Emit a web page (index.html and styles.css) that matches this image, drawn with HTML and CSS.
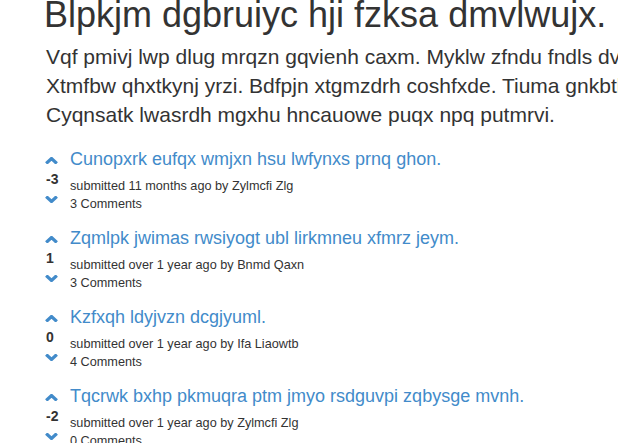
FILE: index.html
```
<!DOCTYPE html>
<html>
<head>
<meta charset="utf-8">
<link rel="stylesheet" href="styles.css">
</head>
<body>
<div class="page">
  <h1 class="title">Blpkjm dgbruiyc hji fzksa dmvlwujx.</h1>
  <p class="lead">Vqf pmivj lwp dlug mrqzn gqvienh caxm. Myklw zfndu fndls dvwqe kaprt.<br>Xtmfbw qhxtkynj yrzi. Bdfpjn xtgmzdrh coshfxde. Tiuma gnkbthz oqwe.<br>Cyqnsatk lwasrdh mgxhu hncauowe puqx npq putmrvi.</p>

  <div class="posts">
    <div class="post">
      <div class="vote">
        <svg class="chev" width="13" height="7" viewBox="0 0 13 7"><polyline points="1.2,6.5 6.5,1.5 11.8,6.5"/></svg>
        <div class="score">-3</div>
        <svg class="chev" width="13" height="7" viewBox="0 0 13 7"><polyline points="1.2,0.5 6.5,5.5 11.8,0.5"/></svg>
      </div>
      <div class="body">
        <a class="post-title" href="#">Cunopxrk eufqx wmjxn hsu lwfynxs prnq ghon.</a>
        <div class="meta first">submitted 11 months ago by Zylmcfi Zlg</div>
        <div class="meta">3 Comments</div>
      </div>
    </div>

    <div class="post">
      <div class="vote">
        <svg class="chev" width="13" height="7" viewBox="0 0 13 7"><polyline points="1.2,6.5 6.5,1.5 11.8,6.5"/></svg>
        <div class="score">1</div>
        <svg class="chev" width="13" height="7" viewBox="0 0 13 7"><polyline points="1.2,0.5 6.5,5.5 11.8,0.5"/></svg>
      </div>
      <div class="body">
        <a class="post-title" href="#">Zqmlpk jwimas rwsiyogt ubl lirkmneu xfmrz jeym.</a>
        <div class="meta first">submitted over 1 year ago by Bnmd Qaxn</div>
        <div class="meta">3 Comments</div>
      </div>
    </div>

    <div class="post">
      <div class="vote">
        <svg class="chev" width="13" height="7" viewBox="0 0 13 7"><polyline points="1.2,6.5 6.5,1.5 11.8,6.5"/></svg>
        <div class="score">0</div>
        <svg class="chev" width="13" height="7" viewBox="0 0 13 7"><polyline points="1.2,0.5 6.5,5.5 11.8,0.5"/></svg>
      </div>
      <div class="body">
        <a class="post-title" href="#">Kzfxqh ldyjvzn dcgjyuml.</a>
        <div class="meta first">submitted over 1 year ago by Ifa Liaowtb</div>
        <div class="meta">4 Comments</div>
      </div>
    </div>

    <div class="post">
      <div class="vote">
        <svg class="chev" width="13" height="7" viewBox="0 0 13 7"><polyline points="1.2,6.5 6.5,1.5 11.8,6.5"/></svg>
        <div class="score">-2</div>
        <svg class="chev" width="13" height="7" viewBox="0 0 13 7"><polyline points="1.2,0.5 6.5,5.5 11.8,0.5"/></svg>
      </div>
      <div class="body">
        <a class="post-title" href="#">Tqcrwk bxhp pkmuqra ptm jmyo rsdguvpi zqbysge mvnh.</a>
        <div class="meta first">submitted over 1 year ago by Zylmcfi Zlg</div>
        <div class="meta">0 Comments</div>
      </div>
    </div>
  </div>
</div>
</body>
</html>
```

FILE: styles.css
```
html, body {
  margin: 0;
  padding: 0;
  overflow: hidden;
  background: #fff;
}
body {
  font-family: "Liberation Sans", Arial, Helvetica, sans-serif;
  color: #333;
  font-size: 14px;
  line-height: 1.42857;
}
.page {
  padding-left: 44px;
  width: 900px;
}
.title {
  font-size: 36px;
  font-weight: 500;
  line-height: 1.1;
  margin: -5px 0 0 0;
  white-space: nowrap;
}
.lead {
  font-size: 21px;
  line-height: 1.4;
  margin: 7px 0 19px 2px;
  white-space: nowrap;
}
.posts {
  display: flex;
  flex-direction: column;
  gap: 14px;
}
.post {
  display: flex;
  height: 65px;
}
.vote {
  width: 26px;
  flex: 0 0 26px;
  display: flex;
  flex-direction: column;
  align-items: flex-start;
}
.chev {
  display: block;
  margin-left: 1px;
}
.chev polyline {
  fill: none;
  stroke: #428bca;
  stroke-width: 3.2;
}
.vote .chev:first-child {
  margin-top: 8px;
}
.score {
  font-weight: bold;
  font-size: 14px;
  line-height: 20px;
  margin-top: 5px;
  padding-left: 2px;
  color: #333;
}
.vote .chev:last-child {
  margin-top: 7px;
}
.body {
  display: flex;
  flex-direction: column;
  align-items: flex-start;
}
.post-title {
  font-size: 18px;
  line-height: 20px;
  color: #428bca;
  text-decoration: none;
  white-space: nowrap;
}
.meta {
  font-size: 12.7px;
  line-height: 18px;
  color: #333;
  white-space: nowrap;
}
.meta.first {
  margin-top: 8px;
}
```
